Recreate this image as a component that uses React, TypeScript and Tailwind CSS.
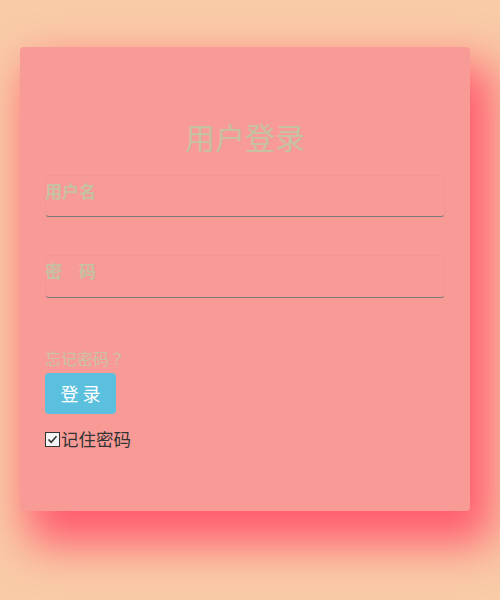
import React from "react";

export default function App() {
  return (
    <div
      className="w-[500px] h-[600px] bg-[#f9cba7] overflow-hidden pt-[47px] pl-[20px]"
      style={{ fontFamily: '"Noto Sans CJK SC", "Noto Sans", sans-serif' }}
    >
      <div className="w-[450px] h-[464px] rounded-[4px] bg-[#f89b97] shadow-[15px_25px_45px_8px_#ff5a6e] px-[25px] pt-[69px]">
        <h1 className="text-center text-[30px] leading-[40px] text-[#c6c1a2] font-normal">用户登录</h1>
        <div className="mt-[19px] flex flex-col">
          <div className="h-[42px] w-[400px] rounded-[4px] border border-[rgba(0,0,0,0.025)] border-b-[#7a7a7a] flex items-start">
            <span className="text-[17px] leading-[20px] font-bold text-[#c6c1a2] mt-[5px] -ml-[1px]">用户名</span>
          </div>
          <div className="mt-[38px] h-[43px] w-[400px] rounded-[4px] border border-[rgba(0,0,0,0.025)] border-b-[#7a7a7a] flex items-start">
            <span className="text-[17px] leading-[20px] font-bold text-[#c6c1a2] mt-[5px] -ml-[1px] whitespace-pre">密　码</span>
          </div>
        </div>
        <div className="mt-[50px] text-[16px] leading-[20px] text-[#c9c3a4]">
          忘记密码<span style={{ fontFamily: '"Noto Sans CJK JP", sans-serif' }}>？</span>
        </div>
        <button className="mt-[5px] w-[71px] h-[41px] rounded-[4px] bg-[#5bc0de] text-white text-[18px] tracking-[4px] pl-[4px] block">登录</button>
        <label className="mt-[14px] flex items-center text-[17.5px] leading-[22px] text-[#333]">
          <span className="w-[15px] h-[15px] border border-[#333] bg-[#f4f4f4] flex items-center justify-center shrink-0">
            <svg width="11" height="11" viewBox="0 0 11 11" fill="none">
              <path d="M1.5 5.5 L4.2 8.3 L9.5 2.2" stroke="#333" strokeWidth="1.6" />
            </svg>
          </span>
          <span className="ml-[1px]">记住密码</span>
        </label>
      </div>
    </div>
  );
}
